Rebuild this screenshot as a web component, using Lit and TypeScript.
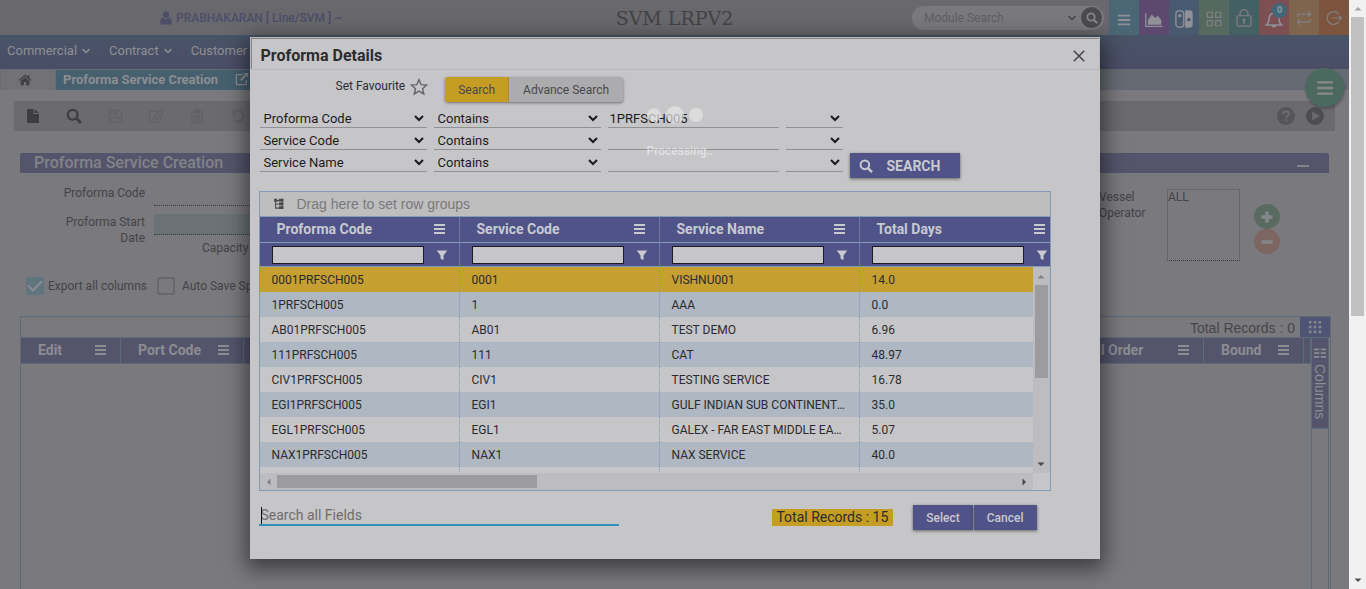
import { LitElement, html, css, svg, nothing } from "lit";
import { customElement } from "lit/decorators.js";

const icons: Record<string, unknown> = {
  user: svg`<path d="M8 8.2a3.6 3.8 0 1 0 0-7.6 3.6 3.8 0 0 0 0 7.6zM4.6 7.8C2 8.2 1.4 10.6 1.4 13c0 1.6 1 2.4 2.4 2.4h8.4c1.4 0 2.4-.8 2.4-2.4 0-2.400-.6-4.800-3.200-5.200-.9.9-2.100 1.400-3.400 1.400s-2.500-.5-3.600-1.400z" fill="currentColor"/>`,
  chevron: svg`<path d="M2.500 5l5.500 5.500L13.500 5" fill="none" stroke="currentColor" stroke-width="2.400"/>`,
  search: svg`<circle cx="6.700" cy="6.700" r="4.900" fill="none" stroke="currentColor" stroke-width="2.300"/><path d="M10.300 10.300l4.600 4.600" stroke="currentColor" stroke-width="2.800"/>`,
  home: svg`<path d="M8 1.800L.7 8l.9 1L8 3.600 14.400 9l.9-1-2.300-2V2.500h-2v1.800z M8 4.800L3 9v5h3.800v-3.800h2.400V14H13V9z" fill="currentColor"/>`,
  popout: svg`<path d="M9 3H2.500A1 1 0 0 0 1.500 4v9.500a1 1 0 0 0 1 1H12a1 1 0 0 0 1-1V9" fill="none" stroke="currentColor" stroke-width="1.500"/><path d="M9.500 1H15v5.500l-1.900-1.900-5.600 5.600-1.700-1.700 5.600-5.600z" fill="currentColor"/>`,
  file: svg`<path d="M2 1h6.500v5H14v9H2z M9.600 1L14 5h-4.400z" fill="currentColor"/>`,
  save: svg`<path d="M2 2h10l2.500 2.500V14.500H2z M4.500 2v4h6V2 M4.500 14v-4.500h7V14 M8.500 3v2" fill="none" stroke="currentColor" stroke-width="1.200"/>`,
  edit: svg`<path d="M10 3H3.200A1.700 1.700 0 0 0 1.500 4.700v7.600A1.700 1.700 0 0 0 3.200 14h7.600a1.700 1.700 0 0 0 1.700-1.700V10" fill="none" stroke="currentColor" stroke-width="1.200"/><path d="M6 11V8.500l6.800-6.800 2.500 2.500L8.500 11z" fill="none" stroke="currentColor" stroke-width="1.200"/>`,
  trash: svg`<path d="M3 4.500h10V14.500H3z M1.500 4h13 M6 4V2h4v2 M6 6.500v6 M8 6.500v6 M10 6.500v6" fill="none" stroke="currentColor" stroke-width="1.300"/>`,
  undo: svg`<path d="M3.200 5.200A5.500 5.500 0 1 1 4 12" fill="none" stroke="currentColor" stroke-width="2"/><path d="M1.500 1.800v5.400h5.400z" fill="currentColor"/>`,
  bars: svg`<path d="M1 3h14M1 8h14M1 13h14" stroke="currentColor" stroke-width="2.200"/>`,
  chart: svg`<path d="M.7 3v11.500h15" fill="none" stroke="currentColor" stroke-width="1.200"/><path d="M2.500 13V9l3.500-5 3 3 2.500-2 3 4v4z" fill="currentColor"/>`,
  cards: svg`<rect x=".8" y=".8" width="7" height="14.400" rx="2.500" fill="none" stroke="currentColor" stroke-width="1.200"/><circle cx="4.200" cy="5" r="1.500" fill="currentColor"/><path d="M9 .3h3.500A3 3 0 0 1 15.700 3.300v9.400a3 3 0 0 1-3.200 3H9z M12.300 7a1.600 1.600 0 1 0 .01 3.200A1.600 1.600 0 0 0 12.300 7z" fill="currentColor" fill-rule="evenodd"/>`,
  tiles: svg`<path d="M2 2h4.500v4.500H2z M9.500 2H14v4.500H9.500z M2 9.500h4.500V14H2z M9.500 9.500H14V14H9.500z" fill="none" stroke="currentColor" stroke-width="1.100"/>`,
  lock: svg`<rect x="1.800" y="6" width="12.400" height="9.300" rx="1.200" fill="none" stroke="currentColor" stroke-width="1.100"/><path d="M4.500 6V4a3.500 3.500 0 0 1 7 0v2" fill="none" stroke="currentColor" stroke-width="1.100"/><path d="M8 8.500a1.400 1.400 0 0 1 .7 2.500v2H7.300v-2A1.400 1.400 0 0 1 8 8.500z" fill="currentColor"/>`,
  bell: svg`<path d="M1 12.500c2.500-1.500 2.500-4 2.800-6.500C4.100 3.500 6 2 8 2s3.900 1.500 4.200 4c.3 2.500.3 5 2.800 6.500z M6.500 13a1.600 1.600 0 0 0 3 0 M8 .5V2" fill="none" stroke="currentColor" stroke-width="1.400"/>`,
  repeat: svg`<path d="M2.500 7V4.500H14 M11.500 2L14 4.500 11.500 7 M13.500 9v2.500H2 M4.500 9L2 11.500 4.500 14" fill="none" stroke="currentColor" stroke-width="1.100"/>`,
  exit: svg`<path d="M12.700 4.200a6.400 6.400 0 1 0 0 7.600 M6 8h9.500 M13 5.800L15.300 8 13 10.200" fill="none" stroke="currentColor" stroke-width="1.200"/>`,
  help: svg`<circle cx="8" cy="8" r="8" fill="currentColor"/><path d="M5.400 6.200C5.500 4.500 6.600 3.800 8 3.800s2.700.8 2.700 2.200C10.700 7.700 8.200 7.700 8.200 9.700 M8.200 10.800v2" fill="none" stroke="#6b6a6e" stroke-width="2"/>`,
  play: svg`<circle cx="8" cy="8" r="8" fill="currentColor"/><path d="M5.500 4v8l7-4z" fill="#6b6a6e"/>`,
  star: svg`<path d="M8 1.500l1.900 4.400 4.800.4-3.600 3.200 1.100 4.700L8 11.700l-4.200 2.500 1.100-4.700L1.300 6.300l4.800-.4z" fill="none" stroke="currentColor" stroke-width="1.300"/>`,
  close: svg`<path d="M2 2l12 12M14 2L2 14" stroke="currentColor" stroke-width="1.900"/>`,
  groups: svg`<path d="M3.500 2v11.500H9 M3.500 8H9 M3.500 3.500H9 M12 3v11" fill="none" stroke="currentColor" stroke-width="1.400"/><path d="M1.500 1h4v4h-4z M8 1h6v3.500H8z M8 6h6v3.500H8z M8 11h6v3.500H8z" fill="currentColor"/>`,
  funnel: svg`<path d="M1 2h14L10 8.500v6.500l-4-2.500v-4z" fill="currentColor"/>`,
  dots: svg`<path d="M1 1h3v3H1z M6.500 1h3v3h-3z M12 1h3v3h-3z M1 6.500h3v3H1z M6.500 6.500h3v3h-3z M12 6.500h3v3h-3z M1 12h3v3H1z M6.500 12h3v3h-3z M12 12h3v3h-3z" fill="currentColor"/>`,
  columns: svg`<path d="M0 2h7v2.200H0z M9 2h7v2.200H9z M0 7h7v2.200H0z M9 7h7v2.200H9z M0 12h7v2.200H0z M9 12h7v2.200H9z" fill="currentColor"/>`,
  plus: svg`<path d="M8 2.500v11M2.500 8h11" stroke="currentColor" stroke-width="3.600"/>`,
  minus: svg`<path d="M2.500 8h11" stroke="currentColor" stroke-width="3.600"/>`,
  up: svg`<path d="M1 11l7-7 7 7z" fill="currentColor"/>`,
  down: svg`<path d="M1 5l7 7 7-7z" fill="currentColor"/>`,
  left: svg`<path d="M11 1L4 8l7 7z" fill="currentColor"/>`,
  right: svg`<path d="M5 1l7 7-7 7z" fill="currentColor"/>`,
};

const icon = (name: string, size = "i16") =>
  html`<svg class="icon ${size}" viewBox="0 0 16 16" aria-hidden="true">${icons[name]}</svg>`;

const burger = html`<svg class="burger" viewBox="0 0 11 10" aria-hidden="true">
  <path d="M0 1h11M0 5h11M0 9h11" stroke="currentColor" stroke-width="2" />
</svg>`;

const shared = css`
  * { box-sizing: border-box; }
  .icon { display: block; flex: none; }
  .i8 { width: 8px; height: 8px; }
  .i10 { width: 10px; height: 10px; }
  .i12 { width: 12px; height: 12px; }
  .i14 { width: 14px; height: 14px; }
  .i16 { width: 16px; height: 16px; }
  .i18 { width: 18px; height: 18px; }
  .burger { display: block; flex: none; width: 11px; height: 10px; }
  button { font: inherit; color: inherit; border: 0; padding: 0; margin: 0; background: none; }
  table { border-collapse: separate; border-spacing: 0; table-layout: fixed; width: 100%; }
  th, td { padding: 0; text-align: left; }
  .headcell { display: flex; align-items: center; justify-content: space-between; white-space: nowrap; }
`;

@customElement("proforma-dialog")
class ProformaDialog extends LitElement {
  static styles = [shared, css`
    :host {
      display: block;
      width: 850px;
      max-width: 100%;
      background: #c6c6c8;
      color: #2c2c30;
      box-shadow: 0 6px 20px 4px rgba(0, 0, 0, 0.5);
      padding-bottom: 29px;
    }
    .title {
      display: flex; align-items: center; justify-content: space-between;
      height: 33px; padding: 3px 13px 0 9px;
      border: 2px solid #858587; border-bottom: 1px solid #b4b4b6; border-right-width: 1px;
      outline: 1px solid #b9b9bb; outline-offset: -1px;
    }
    h2 { margin: 0; font-size: 16px; line-height: 20px; font-weight: 700; }
    .close { color: #4a4a4e; }
    .body { padding: 7px 49px 0 9px; }
    .modes { display: flex; height: 26px; padding-left: 77px; font-size: 12px; }
    .fav { display: flex; align-items: center; height: 18px; gap: 5px; margin-right: 17px; }
    .fav svg { color: #67676b; margin-top: 2px; }
    .switch { display: flex; border-radius: 3px; overflow: hidden; box-shadow: 0 1px 3px rgba(0, 0, 0, 0.45); height: 25px; color: #48484c; background: #acacae; }
    .switch button { padding: 0 14px 0 14px; }
    .switch .on { padding: 0 13px; background: #c59d22; border-right: 1px solid #a88b34; }
    .criteria { display: flex; align-items: flex-end; gap: 7px; margin-top: 5px; }
    .filters { display: grid; grid-template-columns: 167px 167px 171px 57px; column-gap: 7px; row-gap: 2px; padding: 0 0 6px 1px; }
    .filters select, .filters input {
      height: 20px; width: 100%; border: 0; border-bottom: 1px solid #919194; border-radius: 0;
      background: transparent; color: #1b1b1e; font: 13px Roboto, sans-serif; padding: 1px 0 0; outline: 0;
    }
    .filters input { padding-left: 2px; }
    .primary { background: #4f5388; color: #c9c9cf; box-shadow: 0 1px 3px rgba(0, 0, 0, 0.5); height: 25px; }
    .go { display: flex; align-items: center; gap: 14px; width: 110px; padding-left: 9px; font-weight: 700; font-size: 14px; }
    .grid { position: relative; margin-top: 13px; border: 1px solid #829cb6; display: flex; flex-direction: column; height: 300px; }
    .groups { flex: none; display: flex; align-items: center; gap: 12px; height: 24px; padding-left: 13px; background: #bebebf; color: #4a4a4d; }
    .groups span { color: #79797b; font: 14px "Liberation Sans", sans-serif; }
    .view { flex: 1; min-height: 0; overflow: hidden; }
    .c200 { width: 200px; }
    thead { color: #c9c9d0; background: #4f5388; }
    th { border-top: 1px solid #829cb6; border-right: 1px solid #6a7aa4; font-size: 14px; line-height: 16px; font-weight: 700; height: 26px; }
    .search th { height: 25px; border-bottom: 1px solid #829cb6; }
    th:last-child { border-right: 0; }
    .names th { padding-bottom: 2px; }
    .names .headcell { padding: 0 14px 0 17px; }
    th:last-child .headcell { margin-right: -9px; }
    .search .headcell { padding: 0 11px 0 12px; }
    .search input { width: 152px; height: 18px; border: 1px solid #1c1c24; border-radius: 0; background: #c6c6c8; padding: 0 4px; outline: 0; }
    td { height: 25px; padding: 0 12px; font-size: 12px; border-right: 1px dotted #829cb6; color: #2b2b2e; overflow: hidden; white-space: nowrap; text-overflow: ellipsis; }
    td:last-child { border-right: 0; }
    tbody tr:nth-child(even) { background: #afb7c2; }
    tbody tr.picked { background: #c59f30; }
    .vbar { position: absolute; right: 0; top: 75px; bottom: 17px; width: 17px; background: #bdbdbf; display: flex; flex-direction: column; align-items: center; padding: 6px 0 5px; }
    .vthumb { width: 13px; height: 93px; margin: 4px 0 auto; background: #9c9c9e; }
    .hbar { flex: none; display: flex; align-items: center; height: 17px; margin-right: 17px; padding: 0 5px; background: #bdbdbf; }
    .hthumb { width: 260px; height: 13px; margin: 0 auto 0 4px; background: #9c9c9e; }
    .mute { color: #818184; }
    .bar-end { color: #47474a; }
    .foot { display: flex; height: 25px; margin-top: 14px; padding-right: 14px; }
    .all { position: relative; display: flex; width: 360px; height: 21px; border-bottom: 2px solid #318fbd; }
    .all input { width: 100%; border: 0; outline: 0; padding: 0 2px; background: transparent; font: 14px Roboto, sans-serif; color: #2c2c30; }
    .all input::placeholder { color: #6d6d70; opacity: 1; }
    .caret { position: absolute; left: 2px; top: 2px; width: 1px; height: 17px; background: #111; }
    .total { margin: 4px 20px 0 auto; height: 17px; padding: 0 5px 0 4px; background: #c59d22; font-size: 14px; line-height: 17px; }
    .acts { display: flex; gap: 1px; font-size: 12px; font-weight: 500; }
    .acts button { padding: 0 13px; }
  `];

  private fields = ["Proforma Code", "Service Code", "Service Name"];
  private columns = ["Proforma Code", "Service Code", "Service Name", "Total Days"];
  private rows = [
    ["0001PRFSCH005", "0001", "VISHNU001", "14.0"],
    ["1PRFSCH005", "1", "AAA", "0.0"],
    ["AB01PRFSCH005", "AB01", "TEST DEMO", "6.96"],
    ["111PRFSCH005", "111", "CAT", "48.97"],
    ["CIV1PRFSCH005", "CIV1", "TESTING SERVICE", "16.78"],
    ["EGI1PRFSCH005", "EGI1", "GULF INDIAN SUB CONTINENTAL", "35.0"],
    ["EGL1PRFSCH005", "EGL1", "GALEX - FAR EAST MIDDLE EAST", "5.07"],
    ["NAX1PRFSCH005", "NAX1", "NAX SERVICE", "40.0"],
    ["", "", "", ""],
  ];

  render() {
    return html`
      <header class="title">
        <h2>Proforma Details</h2>
        <button class="close" aria-label="Close">${icon("close", "i14")}</button>
      </header>
      <div class="body">
        <div class="modes">
          <button class="fav"><span>Set Favourite</span>${icon("star", "i18")}</button>
          <div class="switch">
            <button class="on">Search</button>
            <button>Advance Search</button>
          </div>
        </div>
        <div class="criteria">
          <div class="filters">
            ${this.fields.map((f, i) => html`
              <select aria-label="Field"><option>${f}</option></select>
              <select aria-label="Condition"><option>Contains</option></select>
              <input aria-label="Value" .value=${i === 0 ? "1PRFSCH005" : ""} />
              <select aria-label="Operator"><option></option></select>
            `)}
          </div>
          <button class="primary go">${icon("search", "i14")}SEARCH</button>
        </div>
        <div class="grid">
          <div class="groups">${icon("groups", "i12")}<span>Drag here to set row groups</span></div>
          <div class="view">
            <table>
              <colgroup><col class="c200" /><col class="c200" /><col class="c200" /><col /></colgroup>
              <thead>
                <tr class="names">
                  ${this.columns.map((c) => html`<th><div class="headcell">${c}${burger}</div></th>`)}
                </tr>
                <tr class="search">
                  ${this.columns.map((c) => html`<th><div class="headcell">
                    <input aria-label="Filter ${c}" />${icon("funnel", "i12")}
                  </div></th>`)}
                </tr>
              </thead>
              <tbody>
                ${this.rows.map((r, i) => html`<tr class=${i === 0 ? "picked" : nothing}>
                  ${r.map((c) => html`<td>${c}</td>`)}
                </tr>`)}
              </tbody>
            </table>
          </div>
          <div class="vbar">
            <span class="mute">${icon("up", "i8")}</span>
            <div class="vthumb"></div>
            <span class="bar-end">${icon("down", "i8")}</span>
          </div>
          <div class="hbar">
            <span class="mute">${icon("left", "i8")}</span>
            <div class="hthumb"></div>
            <span class="bar-end">${icon("right", "i8")}</span>
          </div>
        </div>
        <div class="foot">
          <div class="all">
            <input aria-label="Search all Fields" placeholder="Search all Fields" />
            <span class="caret"></span>
          </div>
          <div class="total">Total Records : 15</div>
          <div class="acts">
            <button class="primary">Select</button>
            <button class="primary">Cancel</button>
          </div>
        </div>
      </div>
    `;
  }
}

@customElement("app-root")
class AppRoot extends LitElement {
  static styles = [shared, css`
    :host {
      display: grid; grid-template-columns: minmax(0, 1fr) 17px;
      height: 100vh; overflow: hidden;
      font: 12px Roboto, sans-serif; color: #444448; background: #7a797d;
    }
    .page { position: relative; overflow: hidden; height: 100vh; display: flex; flex-direction: column; }
    .top { flex: none; display: grid; grid-template-columns: 1fr auto 1fr; align-items: center; height: 35px; background: #69686c; }
    .user { display: flex; align-items: center; gap: 3px; padding-left: 159px; font-weight: 500; color: #4c4e69; }
    h1 { margin: 0; font: 19px "DejaVu Serif", serif; color: #434347; }
    .tools { display: flex; justify-content: flex-end; align-items: center; height: 35px; gap: 5px; }
    .pill { display: flex; align-items: center; width: 192px; height: 24px; padding: 0 2px 0 12px; border-radius: 12px; background: #7a797d; color: #48484c; }
    .pill input { flex: 1; min-width: 0; border: 0; outline: 0; padding: 0; background: transparent; font: 12px Roboto, sans-serif; }
    .pill input::placeholder { color: #606064; opacity: 1; }
    .lens { display: grid; place-items: center; width: 21px; height: 21px; margin-left: 4px; border-radius: 50%; background: #4b4b4f; color: #87868a; }
    .apps { display: flex; }
    .app { position: relative; display: grid; place-items: center; width: 30px; height: 35px; padding-top: 2px; color: #8f9098; }
    .a0 { padding-top: 5px; background: #4b6776; } .a1 { background: #5d486e; } .a2 { background: #485a70; } .a3 { background: #56695f; }
    .a4 { background: #456063; } .a5 { padding-top: 4px; background: #7c4f53; } .a6 { background: #7f654e; } .a7 { background: #7d553f; }
    .a4, .a6, .a7 { padding-top: 0; }
    .a3, .a4, .a6, .a7 { color: #807f83; }
    .count { position: absolute; left: 13px; top: 3px; width: 15px; height: 15px; border-radius: 50%; background: #41677b; color: #9a9a9e; font: 700 9px/15px Roboto, sans-serif; text-align: center; }
    .menu { flex: none; display: flex; align-items: center; gap: 18px; height: 34px; padding: 0 7px 3px; background: linear-gradient(#485468, #4b4d66); color: #908f94; font-size: 13px; }
    .menu a { display: flex; align-items: center; gap: 4px; color: inherit; text-decoration: none; }
    .tabs { flex: none; display: flex; height: 21px; gap: 1px; padding: 1px 0 0 1px; background: #666b73; }
    .home { width: 54px; display: grid; place-items: center; padding-right: 6px; background: #727175; color: #414145; }
    .tab { width: 220px; display: flex; align-items: center; gap: 17px; padding: 0 0 2px 7px; background: #46606f; color: #8d8d91; font-weight: 700; font-size: 13px; }
    .content { flex: 1; display: flex; flex-direction: column; padding: 11px 20px 0; }
    .toolbar { display: flex; align-items: center; gap: 25px; height: 30px; margin: 0 -6px 22px; padding: 0 11px; background: #6b6a6e; color: #616064; }
    .toolbar .dark { color: #3e3e42; }
    .toolbar .gap { flex: 1; }
    .toolbar .end { margin-left: -14px; }
    .toolbar .help { color: #56565a; }
    .toolbar .play { color: #4e4e52; }
    .panel { display: flex; align-items: center; justify-content: space-between; height: 20px; padding: 0 20px 0 14px; border-radius: 2px 2px 0 0; background: #54556c; color: #838287; font-size: 16px; line-height: 20px; }
    .panel h2 { margin: 0; font: inherit; font-weight: 500; }
    .dash { width: 12px; height: 2px; margin-top: 6px; background: #848388; }
    .form { display: flex; justify-content: space-between; height: 143px; line-height: 16px; }
    .left { padding-top: 12px; }
    .pair { display: grid; grid-template-columns: 125px 260px; column-gap: 9px; row-gap: 8px; }
    .pair label { text-align: right; }
    .pair .wrap { padding-left: 40px; }
    .line { display: block; width: 100%; height: 21px; border: 0; border-bottom: 1px dotted #39393c; background: transparent; outline: 0; }
    .date { background: #6c7376; }
    .capacity { padding: 5px 0 0 48px; }
    .checks { display: flex; align-items: center; gap: 4px; height: 18px; margin-top: 21px; padding-left: 6px; }
    .checks input { appearance: none; display: grid; place-items: center; width: 18px; height: 18px; margin: 0; border: 2px solid #69686c; border-radius: 2px; }
    .checks input:checked { background: #61757e; border-color: #61757e; }
    .checks input:checked::before { content: ""; width: 12px; height: 6px; border: solid #8b8d92; border-width: 0 0 2px 2px; rotate: -45deg; translate: 0 -2px; }
    .checks input + label + input { margin-left: 6px; }
    .checks .auto { margin-left: 3px; }
    .right { display: flex; padding: 16px 49px 0 0; }
    .right label { width: 68px; }
    .right select { width: 73px; height: 72px; margin-right: 14px; padding: 0; border: 1px solid #67666b; border-bottom: 1px dotted #39393c; border-radius: 0; background: transparent; font: 12px/16px Roboto, sans-serif; overflow: hidden; scrollbar-width: none; }
    .right option { padding: 0; color: #444448; }
    .round { display: grid; place-items: center; width: 26px; height: 25px; border-radius: 50%; color: #85868a; }
    .rounds { padding-top: 15px; }
    .add { background: #596b60; } .del { background: #7d6562; }
    .grid { flex: 1; display: flex; flex-direction: column; border: 1px solid #5d6a79; border-bottom: 0; margin-right: -2px; }
    .count-row { display: flex; justify-content: flex-end; height: 20px; font: 14px/22px "Liberation Sans", sans-serif; color: #46464a; gap: 5px; }
    .cells { width: 30px; height: 20px; display: grid; place-items: center; background: #4f5475; color: #86868c; }
    .main { flex: 1; display: flex; padding-right: 1px; }
    .tablebox { flex: 1; min-width: 0; }
    .main th { height: 27px; padding-bottom: 1px; font-size: 14px; line-height: 16px; font-weight: 700; color: #8d8c91; background: #54556c; border: solid #5d6a79; border-width: 1px 1px 1px 0; }
    .main .headcell { padding: 0 14px 0 17px; }
    .w-edit { width: 100px; } .w-port { width: 123px; } .w-order { width: 171px; } .w-bound { width: 100px; } .w-end { width: 7px; }
    .side { width: 18px; border: solid #5d6a79; border-width: 1px 1px 0; }
    .side button { display: flex; flex-direction: column; align-items: center; gap: 5px; width: 16px; height: 91px; padding-top: 9px; background: #54556c; color: #8d8c91; border-bottom: 1px solid #5d6a79; }
    .side span { writing-mode: vertical-rl; font: 14px/16px "Liberation Sans", sans-serif; }
    .fab { position: absolute; right: 5px; top: 68px; display: grid; place-items: center; width: 39px; height: 39px; border-radius: 50%; background: #4c6960; color: #87888a; box-shadow: 1px 2px 3px rgba(0, 0, 0, 0.25); }
    .overlay { position: absolute; inset: 0; display: flex; justify-content: center; align-items: flex-start; padding-top: 37px; }
    .loading { position: absolute; left: 0; right: 0; top: 106px; display: grid; justify-content: center; pointer-events: none; color: rgba(255, 255, 255, 0.5); }
    .balls { display: flex; align-items: center; gap: 5px; height: 18px; }
    .ball { width: 14px; height: 14px; border-radius: 50%; background: rgba(230, 230, 230, 0.7); }
    .big { width: 18px; height: 18px; }
    .loading p { width: 56px; margin: 20px 0 0; font-size: 12px; line-height: 14px; font-weight: 500; white-space: nowrap; }
    .scroll { display: flex; flex-direction: column; align-items: center; padding: 5px 0; background: #f1f1f1; color: #a3a3a3; }
    .thumb { width: 13px; height: 299px; margin: 4px 0 auto; background: #c1c1c1; }
    .scroll .last { color: #505050; }
  `];

  private apps = [
    ["bars", "i14"], ["chart", "i18"], ["cards", "i18"], ["tiles", "i18"],
    ["lock", "i18"], ["bell", "i18"], ["repeat", "i18"], ["exit", "i16"],
  ];

  render() {
    return html`
      <div class="page">
        <header class="top">
          <div class="user">${icon("user", "i14")}<span>PRABHAKARAN [ Line/SVM ] ~</span></div>
          <h1>SVM LRPV2</h1>
          <div class="tools">
            <div class="pill">
              <input aria-label="Module Search" placeholder="Module Search" />
              ${icon("chevron", "i10")}
              <button class="lens" aria-label="Search">${icon("search", "i12")}</button>
            </div>
            <div class="apps">
              ${this.apps.map(([name, size], i) => html`<button class="app a${i}" aria-label=${name}>
                ${icon(name, size)}
                ${name === "bell" ? html`<span class="count">0</span>` : nothing}
              </button>`)}
            </div>
          </div>
        </header>
        <nav class="menu">
          ${["Commercial", "Contract", "Customer"].map((m) => html`<a href="#">${m}${icon("chevron", "i10")}</a>`)}
        </nav>
        <div class="tabs">
          <button class="home" aria-label="Home">${icon("home", "i14")}</button>
          <div class="tab">Proforma Service Creation ${icon("popout", "i14")}</div>
        </div>
        <main class="content">
          <div class="toolbar">
            <button class="dark" aria-label="New">${icon("file")}</button>
            <button class="dark" aria-label="Find">${icon("search")}</button>
            ${["save", "edit", "trash", "undo"].map((t) => html`<button aria-label=${t}>${icon(t)}</button>`)}
            <span class="gap"></span>
            <button class="help" aria-label="Help">${icon("help", "i18")}</button>
            <button class="play end" aria-label="Play">${icon("play", "i18")}</button>
          </div>
          <div class="panel"><h2>Proforma Service Creation</h2><span class="dash"></span></div>
          <div class="form">
            <div class="left">
              <div class="pair">
                <label for="code">Proforma Code</label>
                <input id="code" class="line" />
                <label for="date" class="wrap">Proforma Start Date</label>
                <div>
                  <input id="date" class="line date" />
                  <div class="capacity">Capacity</div>
                </div>
              </div>
              <div class="checks">
                <input type="checkbox" id="export" checked /><label for="export">Export all columns</label>
                <input type="checkbox" id="auto" /><label for="auto" class="auto">Auto Save Split</label>
              </div>
            </div>
            <div class="right">
              <label for="operator">Vessel Operator</label>
              <select id="operator" multiple><option>ALL</option></select>
              <div class="rounds">
                <button class="round add" aria-label="Add">${icon("plus", "i16")}</button>
                <button class="round del" aria-label="Remove">${icon("minus", "i16")}</button>
              </div>
            </div>
          </div>
          <div class="grid">
            <div class="count-row">Total Records : 0<button class="cells" aria-label="Grid">${icon("dots", "i14")}</button></div>
            <div class="main">
              <div class="tablebox">
                <table>
                  <colgroup>
                    <col class="w-edit" /><col class="w-port" /><col /><col class="w-order" /><col class="w-bound" /><col class="w-end" />
                  </colgroup>
                  <thead><tr>
                    <th><div class="headcell">Edit${burger}</div></th>
                    <th><div class="headcell">Port Code${burger}</div></th>
                    <th></th>
                    <th><div class="headcell">Port Call Order${burger}</div></th>
                    <th><div class="headcell">Bound${burger}</div></th>
                    <th></th>
                  </tr></thead>
                </table>
              </div>
              <div class="side"><button>${icon("columns", "i12")}<span>Columns</span></button></div>
            </div>
          </div>
        </main>
        <button class="fab" aria-label="Menu">${icon("bars", "i18")}</button>
        <div class="overlay"><proforma-dialog role="dialog" aria-label="Proforma Details"></proforma-dialog></div>
        <div class="loading">
          <div class="balls"><span class="ball"></span><span class="ball big"></span><span class="ball"></span></div>
          <p>Processing..</p>
        </div>
      </div>
      <div class="scroll">
        ${icon("up", "i8")}
        <div class="thumb"></div>
        <span class="last">${icon("down", "i8")}</span>
      </div>
    `;
  }
}
